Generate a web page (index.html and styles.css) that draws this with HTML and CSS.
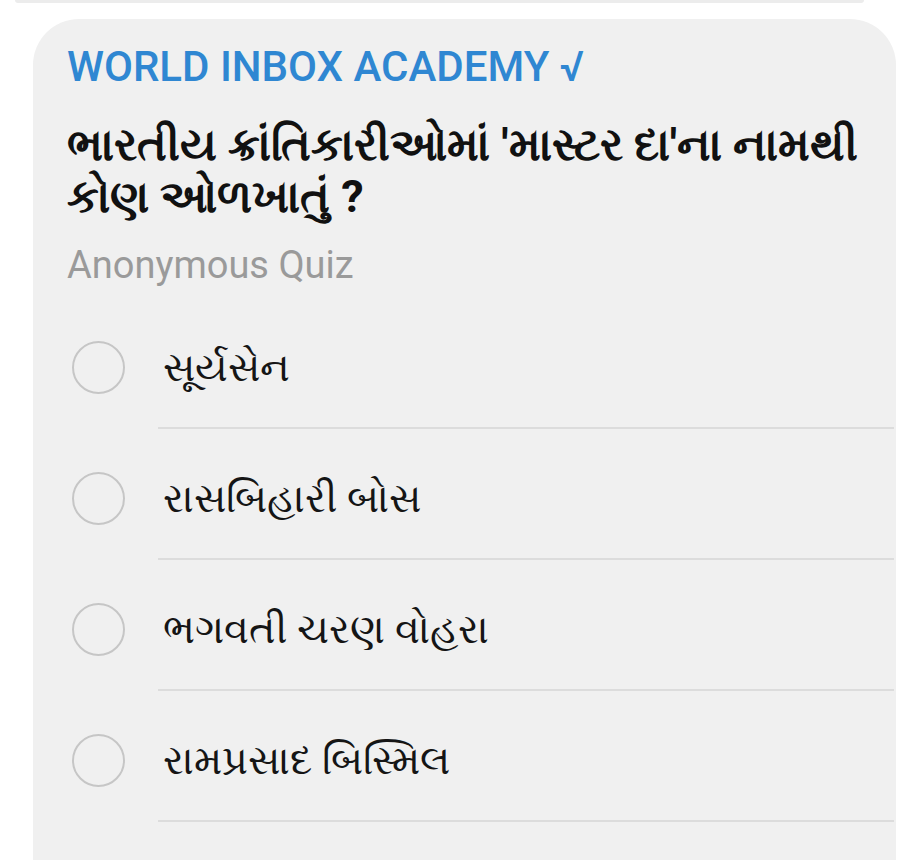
FILE: index.html
```html
<!DOCTYPE html>
<html lang="gu">
<head>
    <meta charset="UTF-8">
    <meta name="viewport" content="width=device-width, initial-scale=1.0">
    <title>Quiz</title>
    <link rel="stylesheet" href="styles.css">
</head>
<body>

    <div class="prevBubble"></div>

    <div class="pollCard">
        <div class="channelName">WORLD INBOX ACADEMY √</div>
        <div class="question">ભારતીય ક્રાંતિકારીઓમાં 'માસ્ટર દા'ના નામથી કોણ ઓળખાતું ?</div>
        <div class="pollType">Anonymous Quiz</div>

        <ul class="options">
            <li class="option">
                <span class="radio"></span>
                <span class="optionText">સૂર્યસેન</span>
            </li>
            <li class="option">
                <span class="radio"></span>
                <span class="optionText">રાસબિહારી બોસ</span>
            </li>
            <li class="option">
                <span class="radio"></span>
                <span class="optionText">ભગવતી ચરણ વોહરા</span>
            </li>
            <li class="option">
                <span class="radio"></span>
                <span class="optionText">રામપ્રસાદ બિસ્મિલ</span>
            </li>
        </ul>
    </div>

</body>
</html>
```

FILE: styles.css
```css
body {
    margin: 0;
    background: #ffffff;
    font-family: Roboto, "Noto Sans", sans-serif;
    overflow: hidden;
}

.prevBubble {
    height: 3px;
    margin: 0 60px 0 15px;
    background: #ececec;
    border-radius: 0 0 4px 4px;
}

.pollCard {
    margin: 16px 28px 0 33px;
    padding: 24px 0 0 34px;
    min-height: 900px;
    background: #f0f0f0;
    border-radius: 46px 46px 0 0;
}

.channelName {
    color: #2f87d2;
    font-size: 42px;
    font-weight: 500;
    line-height: 48px;
}

.question {
    margin-top: 28px;
    padding-right: 20px;
    color: #111111;
    font-size: 45px;
    font-weight: bold;
    line-height: 52px;
}

.pollType {
    margin-top: 20px;
    color: #9a9a9a;
    font-size: 38px;
    line-height: 44px;
}

.options {
    list-style: none;
    margin: 11px 0 0 0;
    padding: 0;
}

.option {
    display: flex;
    align-items: center;
    box-sizing: border-box;
    height: 131px;
    padding-top: 8px;
    position: relative;
}

.option::after {
    content: "";
    position: absolute;
    left: 91px;
    right: 2px;
    bottom: 0;
    height: 2px;
    background: #dcdcdc;
}

.radio {
    flex: none;
    width: 49px;
    height: 49px;
    margin-left: 5px;
    border: 2px solid #c6c6c6;
    border-radius: 50%;
    box-sizing: content-box;
}

.optionText {
    margin-left: 38px;
    color: #151515;
    font-size: 40px;
}
```
